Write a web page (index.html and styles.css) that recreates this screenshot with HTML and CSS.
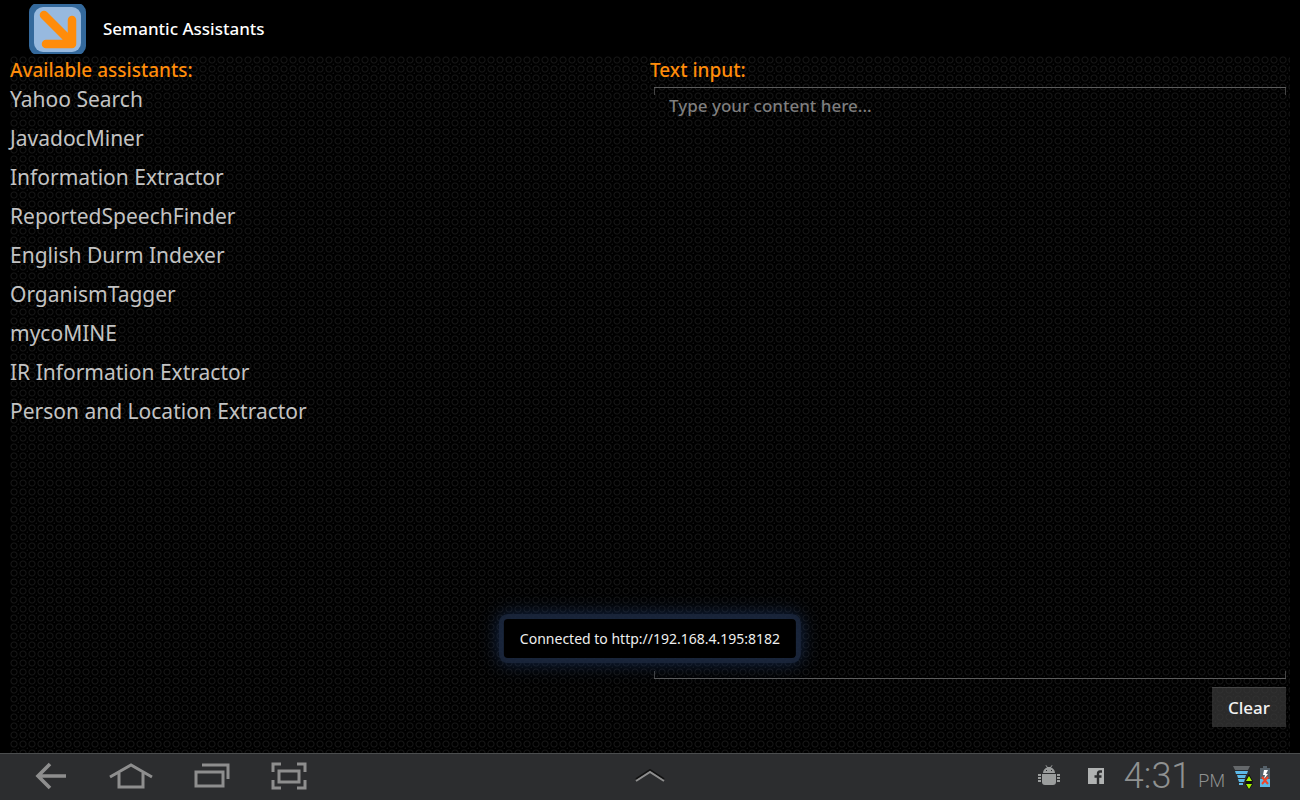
FILE: index.html
```html
<!DOCTYPE html>
<html lang="en">
<head>
<meta charset="utf-8">
<title>Semantic Assistants</title>
<link rel="stylesheet" href="styles.css">
</head>
<body>
<header class="titlebar">
  <svg class="logo" viewBox="0 0 58 50" aria-hidden="true">
    <rect x="0" y="-1" width="57" height="52" rx="9" fill="#34699c"/>
    <rect x="5" y="3" width="47" height="45" rx="9" fill="#97b9df"/>
    <path d="M15 11 43 39M43 16V40H17" fill="none" stroke="#ff8c0a" stroke-width="8.500" stroke-linecap="round" stroke-linejoin="round"/>
  </svg>
  <h1 class="title">Semantic Assistants</h1>
</header>
<main class="content">
  <section class="pane">
    <h2 class="heading">Available assistants:</h2>
    <ul class="assistants">
      <li>Yahoo Search</li>
      <li>JavadocMiner</li>
      <li>Information Extractor</li>
      <li>ReportedSpeechFinder</li>
      <li>English Durm Indexer</li>
      <li>OrganismTagger</li>
      <li>mycoMINE</li>
      <li>IR Information Extractor</li>
      <li>Person and Location Extractor</li>
    </ul>
  </section>
  <section class="pane">
    <h2 class="heading"><label for="content">Text input:</label></h2>
    <div class="field">
      <textarea id="content" class="editor" placeholder="Type your content here..."></textarea>
    </div>
    <button class="clear" type="button">Clear</button>
  </section>
</main>
<div class="toast" role="status">Connected to http://192.168.4.195:8182</div>
<footer class="sysbar">
  <nav class="nav">
    <button class="key" type="button" aria-label="Back"><svg width="34" height="28" viewBox="0 0 34 28"><path d="M32 14H4M16 2 4 14 16 26" fill="none" stroke="#8e8e8e" stroke-width="3.6"/></svg></button>
    <button class="key" type="button" aria-label="Home"><svg width="44" height="28" viewBox="0 0 44 28"><path d="M1 15 22 3 43 15M10 11V25H34V11" fill="none" stroke="#8e8e8e" stroke-width="3"/></svg></button>
    <button class="key" type="button" aria-label="Recent apps"><svg width="36" height="28" viewBox="0 0 36 28"><path d="M2 10H29V24H2ZM8 3H34V17" fill="none" stroke="#8e8e8e" stroke-width="3"/></svg></button>
    <button class="key" type="button" aria-label="Screenshot"><svg width="36" height="28" viewBox="0 0 36 28"><path d="M8 9H28V20H8ZM2 10V2H10M26 2H34V10M34 18V26H26M10 26H2V18" fill="none" stroke="#8e8e8e" stroke-width="3"/></svg></button>
  </nav>
  <button class="key" type="button" aria-label="Show tray"><svg width="32" height="14" viewBox="0 0 32 14"><path d="M2 10 16 1 30 10" fill="none" stroke="#111" stroke-width="2"/><path d="M2 12 16 3 30 12" fill="none" stroke="#8e8e8e" stroke-width="2"/></svg></button>
  <div class="status">
    <svg class="droid" width="22" height="22" viewBox="0 0 22 22" aria-hidden="true" fill="#9b9d9d"><path d="M5 8C5 5 7 3 9 2.400L7.500.5 8 0 9.700 2H12.300L14 0 14.500.5 13 2.400C15 3 17 5 17 8ZM4 9H18V17Q18 20 15 20H7Q4 20 4 17Z"/><path d="M0 9H3V17H0ZM19 9H22V17H19Z"/><path d="M0 11.500H3M0 14.500H3M19 11.500H22M19 14.500H22" stroke="#2c2d2f"/><path d="M8 5H9V6H8ZM13 5H14V6H13Z" fill="#2c2d2f"/></svg>
    <svg class="fb" width="16" height="16" viewBox="0 0 16 16" aria-hidden="true"><path fill="#b0b2b2" d="M0 0H16V16H0Z"/><path d="M14 3.500H12Q10 3.500 10 6V16M6.500 8.500H13.500" fill="none" stroke="#2c2d2f" stroke-width="2.400"/></svg>
    <time class="clock">4:31</time><span class="ampm">PM</span>
    <svg class="signal" width="20" height="25" viewBox="0 0 20 25" aria-hidden="true"><path d="M0 1H17L15 5H2Z" fill="#65686b"/><path d="M2 6H15L14 9H3ZM4 10H13L12 13H5ZM5 14H12L11 17H6ZM6 18H10V20H6Z" fill="#5db9e8"/><path d="M16 9 20 16 19 18 20 19 16 25 12 19 13 17 12 16Z" fill="#111"/><path d="M16 11 19 16H13ZM13 19H19L16 24Z" fill="#a6f500"/></svg>
    <svg class="battery" width="10" height="21" viewBox="0 0 10 21" aria-hidden="true"><path d="M3 0H7V2H10V21H0V2H3Z" fill="#56616a"/><path d="M0 13H10V21H0Z" fill="#5db9e8"/><path d="M4 4H8L6 8H8L4 13 5 9H3Z" fill="#fff"/><path d="M2 11 8 18M8 11 2 18" stroke="#f0452a" stroke-width="2"/></svg>
  </div>
</footer>
</body>
</html>
```
FILE: styles.css
```css
* { box-sizing: border-box; }
body {
  margin: 0;
  height: 100vh;
  display: flex;
  flex-direction: column;
  background: #000;
  color: #c3c3c3;
  font-family: "Noto Sans", "Open Sans", sans-serif;
  font-weight: 500;
}
.titlebar {
  height: 56px;
  display: flex;
  align-items: center;
  gap: 16px;
  padding: 2px 29px 0;
}
.logo { width: 58px; height: 50px; }
.title { margin: 0; padding-bottom: 2px; color: #fff; font-size: 17px; font-weight: 500; }
.content {
  flex: 1;
  min-height: 0;
  margin: 0 10px;
  display: grid;
  grid-template-columns: 1fr 1fr;
  background-color: #000;
  background-image:
    radial-gradient(circle at 4px 4px, transparent 2px, #171717 3px, transparent 4px),
    radial-gradient(circle at 9px 9px, #151515 1px, transparent 2px);
  background-size: 9px 9px;
}
.pane { display: flex; flex-direction: column; min-width: 0; }
.heading { margin: 0; color: #ff8c0a; font-size: 19px; line-height: 28px; font-weight: 500; }
.assistants { margin: 0; padding: 0; list-style: none; font-size: 21px; font-weight: 400; line-height: 39px; }
.assistants li:first-child { margin-top: -4px; }
.field {
  flex: 1;
  min-height: 0;
  display: flex;
  margin: 3px 4px 8px;
  background:
    linear-gradient(#444, #444) 0 0 / 1px 7px no-repeat,
    linear-gradient(#444, #444) 100% 0 / 1px 7px no-repeat,
    linear-gradient(#444, #444) 0 100% / 1px 7px no-repeat,
    linear-gradient(#444, #444) 100% 100% / 1px 7px no-repeat;
  border-top: 1px solid #5c5c5c;
  border-bottom: 1px solid #5c5c5c;
}
.editor {
  flex: 1;
  padding: 6px 15px;
  border: 0;
  outline: 0;
  resize: none;
  background: transparent;
  color: #ddd;
  font: 500 17px/24px "Noto Sans", sans-serif;
}
.editor::placeholder { color: #7e7e7e; opacity: 1; }
.clear {
  align-self: flex-end;
  height: 40px;
  margin: 0 4px 26px;
  padding: 0 16px;
  border: 0;
  border-top: 1px solid #444;
  background: rgba(60, 60, 60, .7);
  color: #f2f2f2;
  font: 500 17px "Noto Sans", sans-serif;
}
.toast {
  position: absolute;
  left: 50%;
  bottom: 142px;
  transform: translateX(-50%);
  padding: 0 16px;
  border-radius: 4px;
  background: #000;
  color: #eee;
  font-size: 14px;
  font-weight: 400;
  line-height: 39px;
  white-space: nowrap;
  box-shadow: 0 0 0 5px rgba(28, 39, 60, .8), 0 0 18px 6px rgba(28, 52, 96, .7);
}
.sysbar {
  height: 47px;
  display: grid;
  grid-template-columns: 1fr auto 1fr;
  align-items: center;
  padding: 0 30px 2px;
  border-top: 1px solid #4b4d4e;
  background: #2c2d2f;
}
.nav { display: flex; align-items: center; gap: 41px; padding-left: 4px; }
.key { padding: 0; border: 0; background: none; display: flex; }
.status { display: flex; align-items: center; justify-content: flex-end; color: #8f9191; }
.fb { margin: 0 20px 0 28px; }
.clock { font: 300 36px/44px Roboto, sans-serif; }
.ampm { margin: 10px 8px 0 7px; font: 300 18px/24px Roboto, sans-serif; }
.signal { margin-top: 2px; }
.battery { margin-left: 7px; }
```
